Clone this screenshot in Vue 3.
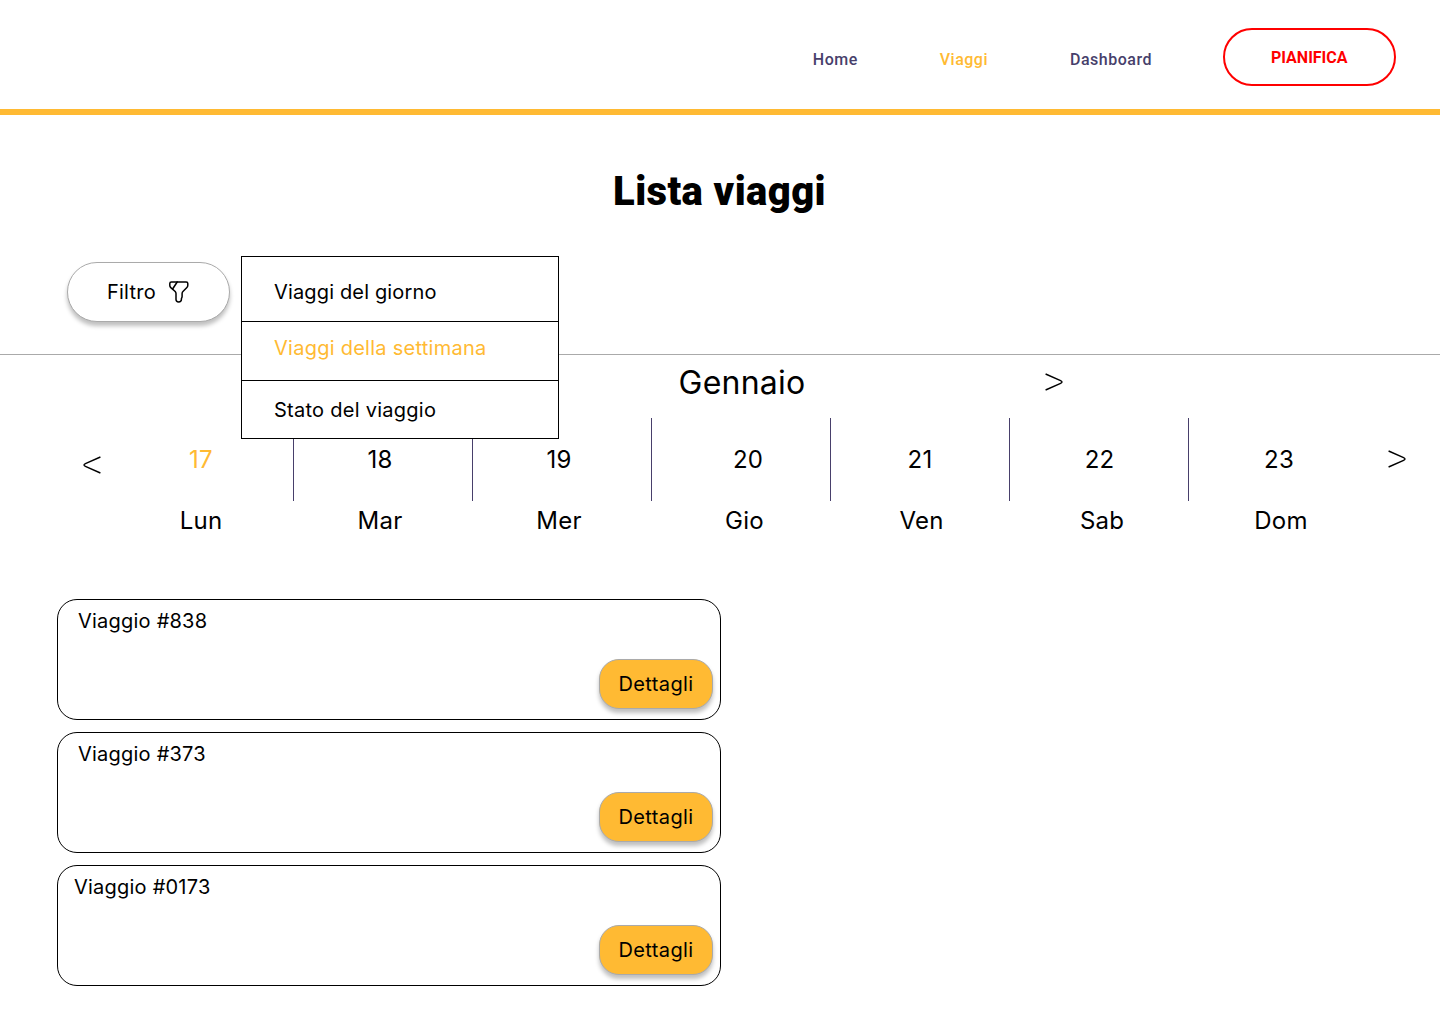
<script setup>
const links = [
  { label: 'Home', active: false },
  { label: 'Viaggi', active: true },
  { label: 'Dashboard', active: false },
]
const filters = [
  { label: 'Viaggi del giorno', active: false },
  { label: 'Viaggi della settimana', active: true },
  { label: 'Stato del viaggio', active: false },
]
const days = [
  { num: 17, name: 'Lun', active: true },
  { num: 18, name: 'Mar' },
  { num: 19, name: 'Mer' },
  { num: 20, name: 'Gio' },
  { num: 21, name: 'Ven' },
  { num: 22, name: 'Sab' },
  { num: 23, name: 'Dom' },
]
const trips = ['838', '373', '0173']
</script>

<template>
  <div class="page">
    <header class="header">
      <nav class="nav">
        <a v-for="l in links" :key="l.label" class="link" :class="{ active: l.active }">{{ l.label }}</a>
      </nav>
      <button class="plan">PIANIFICA</button>
    </header>

    <h1 class="title">Lista viaggi</h1>

    <section class="toolbar">
      <button class="filter">
        <span class="filter-label">Filtro</span>
        <svg class="funnel" width="22" height="24" viewBox="0 0 22 24" fill="none" stroke="#000" stroke-width="1.5" stroke-linecap="round" stroke-linejoin="round">
          <path d="M3.4 1.9H18.2C19.1 1.9 19.8 2.6 19.8 3.5V5.3C19.8 6.1 19.4 7 18.9 7.5L15.2 11.2C14.5 11.9 14.1 12.6 14.1 13.4V16.5C14.1 17.2 13.8 18 13.4 18.6V19.6C13.4 22.7 8 22.7 8 19.6V13.6C8 12.9 7.7 12.1 7.2 11.5L2.8 7.6C2.2 7 1.8 6.1 1.8 5.4V3.5C1.8 2.6 2.5 1.9 3.4 1.9Z" />
          <path d="M9.2 2L4.6 9" />
        </svg>
      </button>
      <ul class="menu">
        <li v-for="f in filters" :key="f.label" :class="{ active: f.active }">{{ f.label }}</li>
      </ul>
    </section>

    <section class="calendar">
      <div class="month">
        <span class="month-name">Gennaio</span>
        <svg class="chevron" width="20" height="20" viewBox="0 0 20 20"><path d="M1.6 2L16.6 8.7Q19.4 10 16.6 11.3L1.6 18" /></svg>
      </div>
      <div class="week">
        <svg class="chevron prev" width="20" height="20" viewBox="0 0 20 20"><path d="M18.4 2L3.4 8.7Q.6 10 3.4 11.3L18.4 18" /></svg>
        <div class="days">
          <div v-for="d in days" :key="d.num" class="day">
            <span class="num" :class="{ active: d.active }">{{ d.num }}</span>
            <span class="name">{{ d.name }}</span>
          </div>
        </div>
        <svg class="chevron next" width="20" height="20" viewBox="0 0 20 20"><path d="M1.6 2L16.6 8.7Q19.4 10 16.6 11.3L1.6 18" /></svg>
      </div>
    </section>

    <main class="trips">
      <article v-for="t in trips" :key="t" class="trip">
        <span class="trip-name">Viaggio #{{ t }}</span>
        <button class="details">Dettagli</button>
      </article>
    </main>
  </div>
</template>

<style>
body {
  background: #fff;
}
</style>

<style scoped>
.page {
  width: 1440px;
  height: 1024px;
  overflow: hidden;
  display: flex;
  flex-direction: column;
  font: 400 20px/24px Inter, sans-serif;
  letter-spacing: 0.22px;
  color: #000;
}
.page *,
.page {
  box-sizing: border-box;
}
button {
  padding: 0;
  font: inherit;
  letter-spacing: inherit;
  color: inherit;
}
.header {
  height: 115px;
  flex: none;
  border-bottom: 6px solid #ffba33;
  padding: 28px 44px 0 0;
  display: flex;
  justify-content: flex-end;
  align-items: flex-start;
}
.nav {
  display: flex;
  gap: 82px;
  margin: 20px 70.6px 0 0;
  font: 500 16px/24px Roboto, sans-serif;
  letter-spacing: 0.5px;
  color: #473f6b;
}
.active {
  color: #ffba33;
}
.plan {
  width: 173.5px;
  height: 58px;
  padding-top: 2px;
  border: 2px solid #f00;
  border-radius: 29px;
  background: #fff;
  color: #f00;
  font: 700 16px/24px Roboto, sans-serif;
  letter-spacing: 0;
}
.title {
  margin: 53px 1px 0 0;
  height: 48px;
  flex: none;
  text-align: center;
  font: 900 40px/48px Roboto, sans-serif;
  letter-spacing: 0.4px;
}
.toolbar {
  position: relative;
  flex: none;
  height: 139px;
  padding: 46px 0 0 67px;
  border-bottom: 1px solid #aaa;
}
.filter {
  display: flex;
  align-items: center;
  width: 163px;
  height: 60px;
  padding-left: 39px;
  border: 1px solid #aaa;
  border-radius: 30px;
  background: #fff;
  box-shadow: 0 4px 4px rgba(0, 0, 0, 0.25);
}
.filter-label {
  width: 61px;
  text-align: left;
}
.menu {
  position: absolute;
  z-index: 1;
  left: 241px;
  top: 40px;
  width: 318px;
  margin: 0;
  padding: 0;
  list-style: none;
  border: 1px solid #000;
  background: #fff;
}
.menu li {
  height: 57px;
  padding: 17px 0 0 32px;
  letter-spacing: 0.26px;
}
.menu li:nth-child(1) {
  height: 65px;
  padding-top: 23px;
  border-bottom: 1px solid #000;
  letter-spacing: 0.15px;
}
.menu li:nth-child(2) {
  height: 59px;
  padding-top: 14px;
  border-bottom: 1px solid #000;
}
.calendar {
  flex: none;
  height: 244px;
}
.month {
  height: 63px;
  padding: 8px 0 0 678.6px;
  display: flex;
  align-items: flex-start;
}
.month-name {
  width: 365.9px;
  font-size: 32px;
  line-height: 40px;
}
.chevron {
  flex: none;
  fill: none;
  stroke: #000;
  stroke-width: 1.4;
}
.month .chevron {
  margin-top: 9px;
}
.week {
  display: flex;
  align-items: flex-start;
}
.prev {
  margin: 37px 0 0 82px;
}
.next {
  margin: 31px 0 0 20px;
}
.days {
  display: flex;
  margin-left: 12px;
}
.day {
  width: 179px;
  height: 83px;
  padding: 27px 6px 0 0;
  border-left: 1px solid #473f6b;
  display: flex;
  flex-direction: column;
  align-items: center;
  gap: 31px;
  font-size: 24px;
  line-height: 30px;
}
.day:first-child {
  border-left-color: transparent;
}
.day:nth-child(4) {
  padding-right: 0;
}
.day:nth-child(4) .num {
  margin-left: 14px;
}
.day:nth-child(4) .name {
  margin-left: 7px;
}
.day:nth-child(5),
.day:nth-child(7) {
  padding-right: 0;
}
.day:nth-child(5) .name {
  margin-left: 3px;
}
.day:nth-child(6) .name {
  margin-left: 12px;
}
.day:nth-child(6) .num {
  margin-left: 7px;
}
.day:nth-child(7) .num {
  margin-left: 2px;
}
.day:nth-child(7) .name {
  margin-left: 6px;
}
.trips {
  margin-left: 57px;
  width: 664px;
  display: flex;
  flex-direction: column;
  gap: 12px;
}
.trip {
  height: 121px;
  flex: none;
  border: 1px solid #000;
  border-radius: 20px;
  padding: 9px 7px 0 20px;
  display: flex;
  justify-content: space-between;
  align-items: flex-start;
}
.trip:last-child {
  padding-left: 16px;
}
.details {
  width: 114px;
  height: 50px;
  margin-top: 50px;
  border: 1px solid #aaa;
  border-radius: 20px;
  background: #ffba33;
  box-shadow: 0 4px 4px rgba(0, 0, 0, 0.25);
  letter-spacing: 0.38px;
}
</style>
